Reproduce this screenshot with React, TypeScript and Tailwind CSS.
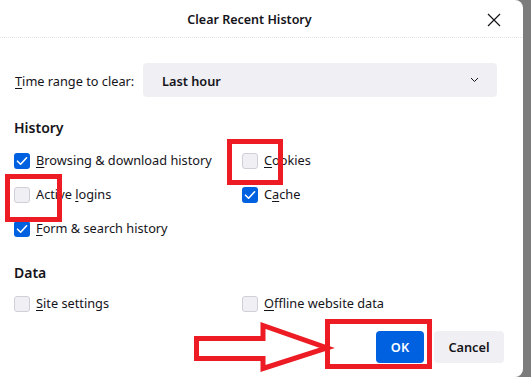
import * as React from "react";

type Item = { label: string; key: number; checked: boolean };

function Label({ text, k }: { text: string; k: number }) {
  return (
    <span>
      {text.slice(0, k)}
      <span className="underline underline-offset-2 decoration-1">{text[k]}</span>
      {text.slice(k + 1)}
    </span>
  );
}

function Check({ item }: { item: Item }) {
  return (
    <div className="flex items-center h-[34px] gap-[6px]">
      {item.checked ? (
        <span className="w-4 h-4 rounded-[3px] bg-[#0061e0] flex items-center justify-center">
          <svg width="12" height="12" viewBox="0 0 12 12" fill="none">
            <path d="M1.5 6.2 4.6 9.2 10.6 2.8" stroke="white" strokeWidth="1.6" strokeLinecap="round" strokeLinejoin="round" />
          </svg>
        </span>
      ) : (
        <span className="w-4 h-4 rounded-[3px] bg-[#f0f0f4] border border-[#cfcfd8]" />
      )}
      <Label text={item.label} k={item.key} />
    </div>
  );
}

const history: Item[] = [
  { label: "Browsing & download history", key: 0, checked: true },
  { label: "Cookies", key: 0, checked: false },
  { label: "Active logins", key: 7, checked: false },
  { label: "Cache", key: 1, checked: true },
  { label: "Form & search history", key: 0, checked: true },
];

const data: Item[] = [
  { label: "Site settings", key: 0, checked: false },
  { label: "Offline website data", key: 0, checked: false },
];

export default function App() {
  return (
    <div className="w-[531px] h-[377px] bg-[#7c7c7c] flex overflow-hidden text-[#15141a] text-[12.75px] font-['Noto_Sans',sans-serif]">
      <div className="relative w-[523px] h-full bg-white rounded-r-lg flex flex-col">
        <div className="h-[38px] flex items-center border-b border-dotted border-[#e4e4e8]">
          <div className="flex-1 text-center pl-[12px] pt-[3px] font-semibold text-[12.5px]">Clear Recent History</div>
          <svg width="14" height="14" viewBox="0 0 14 14" className="mr-[22px] mt-[2px]" fill="none">
            <path d="M1 1 13 13M13 1 1 13" stroke="#15141a" strokeWidth="1.2" />
          </svg>
        </div>

        <div className="px-[14px] flex flex-col">
          <div className="flex items-center mt-[25px] h-[34px]">
            <span className="w-[129px] pl-[1px] pt-[3px]">
              <Label text="Time range to clear:" k={0} />
            </span>
            <div className="w-[354px] h-full bg-[#f0f0f4] rounded flex items-center pl-[19px] pr-[18px]">
              <span className="flex-1 font-semibold pt-[3px]">Last hour</span>
              <svg width="9" height="6" viewBox="0 0 9 6" fill="none">
                <path d="M1 1 4.5 4.5 8 1" stroke="#15141a" strokeWidth="1" />
              </svg>
            </div>
          </div>

          <div className="mt-[21px] h-5 leading-5 font-semibold text-[14px]">History</div>
          <div className="mt-[6px] grid grid-cols-[228px_1fr]">
            {history.map((it) => (
              <Check key={it.label} item={it} />
            ))}
          </div>

          <div className="mt-[17px] h-5 leading-5 font-semibold text-[14px]">Data</div>
          <div className="mt-[4px] grid grid-cols-[228px_1fr]">
            {data.map((it) => (
              <Check key={it.label} item={it} />
            ))}
          </div>

          <div className="mt-[10px] flex justify-end gap-[10px] pr-[5px]">
            <button className="w-[48px] h-[32px] rounded bg-[#0061e0] text-white font-semibold pt-[1px]">OK</button>
            <button className="w-[70px] h-[32px] rounded bg-[#f0f0f4] font-semibold pt-[1px]">Cancel</button>
          </div>
        </div>

        {/* annotations */}
        <div className="absolute left-[227px] top-[139px] w-[56px] h-[46px] border-[5px] border-[#ed1c24]" />
        <div className="absolute left-[5px] top-[174px] w-[57px] h-[48px] border-[5px] border-[#ed1c24]" />
        <div className="absolute left-[325px] top-[319px] w-[107px] h-[50px] border-[5px] border-[#ed1c24]" />
        <svg className="absolute left-0 top-0" width="523" height="377" fill="none">
          <polygon
            points="196.5,338.5 263,338.5 263,325.5 327,348 263,368.5 263,358.5 196.5,358.5"
            fill="white"
            stroke="#ed1c24"
            strokeWidth="5"
            strokeLinejoin="miter"
          />
        </svg>
      </div>
    </div>
  );
}
